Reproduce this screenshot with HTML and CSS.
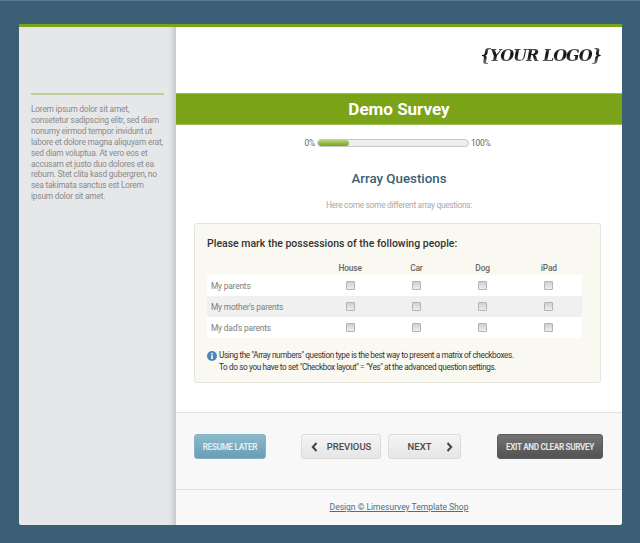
FILE: index.html
```html
<!DOCTYPE html>
<html lang="en">
  <head>
    <meta charset="UTF-8" />
    <title>Demo Survey</title>
    <link rel="stylesheet" href="styles.css">
  </head>
  <body>
    <div class="wrap">
      <aside class="sidebar">
        <p>Lorem ipsum dolor sit amet, consetetur sadipscing elitr, sed diam nonumy eirmod tempor invidunt ut labore et dolore magna aliquyam erat, sed diam voluptua. At vero eos et accusam et justo duo dolores et ea rebum. Stet clita kasd gubergren, no sea takimata sanctus est Lorem ipsum dolor sit amet.</p>
      </aside>

      <main class="content">
        <header class="logo-bar">
          <span class="logo">{YOUR LOGO}</span>
        </header>
        <h1 class="survey-title">Demo Survey</h1>

        <div class="progress">
          <span>0%</span>
          <div class="progress-track"><div class="progress-fill"></div></div>
          <span>100%</span>
        </div>

        <h2 class="group-title">Array Questions</h2>
        <p class="group-desc">Here come some different array questions:</p>

        <section class="question">
          <h3>Please mark the possessions of the following people:</h3>
          <table class="matrix">
            <thead>
              <tr>
                <th></th>
                <th>House</th>
                <th>Car</th>
                <th>Dog</th>
                <th>iPad</th>
              </tr>
            </thead>
            <tbody>
              <tr>
                <td>My parents</td>
                <td><input type="checkbox" /></td>
                <td><input type="checkbox" /></td>
                <td><input type="checkbox" /></td>
                <td><input type="checkbox" /></td>
              </tr>
              <tr class="alt">
                <td>My mother's parents</td>
                <td><input type="checkbox" /></td>
                <td><input type="checkbox" /></td>
                <td><input type="checkbox" /></td>
                <td><input type="checkbox" /></td>
              </tr>
              <tr>
                <td>My dad's parents</td>
                <td><input type="checkbox" /></td>
                <td><input type="checkbox" /></td>
                <td><input type="checkbox" /></td>
                <td><input type="checkbox" /></td>
              </tr>
            </tbody>
          </table>
          <div class="help">
            <svg class="help-icon" width="10" height="10" viewBox="0 0 10 10">
              <circle cx="5" cy="5" r="5" fill="#4f86b8" />
              <rect x="4.2" y="4.2" width="1.6" height="3.8" fill="#fff" />
              <rect x="4.2" y="2" width="1.6" height="1.5" fill="#fff" />
            </svg>
            <p>Using the "Array numbers" question type is the best way to present a matrix of checkboxes.<br />To do so you have to set "Checkbox layout" = "Yes" at the advanced question settings.</p>
          </div>
        </section>

        <div class="nav-bar">
          <button class="btn btn-resume">RESUME LATER</button>
          <div class="nav-group">
            <button class="btn btn-nav btn-prev">
              <svg width="7" height="10" viewBox="0 0 7 10"><path d="M5.5 1L1.8 5l3.7 4" fill="none" stroke="#444" stroke-width="2" /></svg>
              PREVIOUS
            </button>
            <button class="btn btn-nav btn-next">
              NEXT
              <svg width="7" height="10" viewBox="0 0 7 10"><path d="M1.5 1l3.7 4-3.7 4" fill="none" stroke="#444" stroke-width="2" /></svg>
            </button>
          </div>
          <button class="btn btn-exit">EXIT AND CLEAR SURVEY</button>
        </div>

        <footer class="foot">
          <a href="#">Design © Limesurvey Template Shop</a>
        </footer>
      </main>
    </div>
  </body>
</html>
```

FILE: styles.css
```css
html,
body {
  height: 100%;
}
body {
  margin: 0;
  padding: 24px 18px 18px 19px;
  box-sizing: border-box;
  background-color: #3b6076;
  border-top: 1px solid #557a8e;
  font-family: Roboto, "Liberation Sans", sans-serif;
  overflow: hidden;
}
.wrap {
  display: flex;
  width: 603px;
  height: 501px;
  box-sizing: border-box;
  margin-top: -1px;
  border-top: 3px solid #7ba318;
  border-radius: 0 0 3px 3px;
  overflow: hidden;
  background-color: #fff;
}
.sidebar {
  width: 157px;
  flex: none;
  box-sizing: border-box;
  padding: 66px 12px 0;
  background-color: #e6e7e9;
  box-shadow: inset -7px 0 6px -5px rgba(0, 0, 0, 0.18);
}
.sidebar p {
  margin: 0;
  padding-top: 9px;
  border-top: 2px solid #bccf97;
  font-size: 8.4px;
  letter-spacing: -0.22px;
  line-height: 10.9px;
  color: #8b8b8b;
}
.content {
  flex: 1;
  display: flex;
  flex-direction: column;
  min-width: 0;
}
.logo-bar {
  height: 66px;
  flex: none;
  display: flex;
  justify-content: flex-end;
  align-items: center;
  padding-right: 21px;
  box-sizing: border-box;
  padding-bottom: 10px;
}
.logo {
  font-family: "DejaVu Serif", serif;
  font-weight: bold;
  font-style: italic;
  font-size: 16px;
  letter-spacing: -1px;
  background: linear-gradient(#777 0, #111 40%, #222 60%, #999 100%);
  -webkit-background-clip: text;
  background-clip: text;
  color: transparent;
}
.survey-title {
  margin: 0;
  height: 32px;
  flex: none;
  box-sizing: border-box;
  border-top: 1px solid #a0bd5c;
  border-bottom: 1px solid #a0bd5c;
  background-color: #7ba318;
  color: #fff;
  font-size: 17px;
  font-weight: 700;
  line-height: 30px;
  text-align: center;
}
.progress {
  display: flex;
  justify-content: center;
  align-items: center;
  gap: 2px;
  margin-top: 13px;
  padding-right: 3px;
  font-size: 8.4px;
  letter-spacing: -0.2px;
  line-height: 10px;
  color: #666;
}
.progress-track {
  width: 152px;
  height: 8px;
  box-sizing: border-box;
  border: 1px solid #c8c8c8;
  border-radius: 4px;
  background-color: #eee;
  overflow: hidden;
}
.progress-fill {
  width: 31px;
  height: 100%;
  border-radius: 3px;
  background: linear-gradient(#b5d27a, #7ba318);
}
.group-title {
  margin: 22px 0 0;
  font-size: 13.3px;
  font-weight: 500;
  line-height: 18px;
  color: #3b6076;
  text-align: center;
}
.group-desc {
  margin: 11px 0 0;
  font-size: 8.4px;
  letter-spacing: -0.3px;
  line-height: 12px;
  color: #a8a8a8;
  text-align: center;
}
.question {
  margin: 12px 21px 0 18px;
  height: 160px;
  box-sizing: border-box;
  padding: 13px 18px 0 12px;
  background-color: #f9f8f1;
  border: 1px solid #e6e6dc;
  border-radius: 3px;
}
.question h3 {
  margin: 0;
  font-size: 10.5px;
  font-weight: 500;
  line-height: 14px;
  color: #333;
}
.matrix {
  width: 375px;
  margin-top: 11px;
  border-collapse: collapse;
  table-layout: fixed;
}
.matrix th {
  height: 13px;
  padding: 0;
  font-size: 8.4px;
  font-weight: 500;
  letter-spacing: -0.15px;
  line-height: 13px;
  color: #666;
  text-align: center;
}
.matrix th:first-child {
  width: 110px;
}
.matrix td {
  height: 21px;
  padding: 0;
  background-color: #fff;
  text-align: center;
  line-height: 0;
}
.matrix td:first-child {
  padding-left: 4px;
  font-size: 8.4px;
  letter-spacing: -0.2px;
  line-height: 12px;
  color: #7d7d7d;
  text-align: left;
}
.matrix .alt td {
  background-color: #f0f0f0;
}
.matrix input {
  appearance: none;
  width: 9px;
  height: 9px;
  margin: 0;
  border: 1px solid #b4b4b4;
  border-radius: 1px;
  background: linear-gradient(#d0d0d0, #eeeeee);
  vertical-align: middle;
}
.help {
  display: flex;
  gap: 2px;
  margin-top: 11px;
  color: #333;
}
.help-icon {
  flex: none;
  margin-top: 2px;
}
.help p {
  margin: 0;
  font-size: 8.2px;
  letter-spacing: -0.38px;
  line-height: 12px;
}
.nav-bar {
  margin-top: 29px;
  height: 78px;
  flex: none;
  box-sizing: border-box;
  display: flex;
  justify-content: space-between;
  align-items: flex-start;
  padding: 21px 19px 0 18px;
  background-color: #f8f8f8;
  border-top: 1px solid #e2e2e2;
  border-bottom: 1px solid #e2e2e2;
}
.nav-group {
  display: flex;
  gap: 7px;
  margin-left: -1px;
}
.btn {
  height: 25px;
  padding: 0;
  box-sizing: border-box;
  border-radius: 3px;
  font-family: inherit;
  font-weight: 700;
  cursor: pointer;
}
.btn-resume {
  width: 72px;
  border: 1px solid #82b4c8;
  background: linear-gradient(#8db9cb, #6a9db3);
  color: #dfeef4;
  font-size: 8.2px;
  letter-spacing: -0.35px;
}
.btn-nav {
  display: flex;
  align-items: center;
  justify-content: center;
  border: 1px solid #dcdcdc;
  background: linear-gradient(#f4f4f4, #e6e6e6);
  color: #4a4a4a;
  font-size: 9.5px;
  font-weight: 500;
}
.btn-prev {
  width: 80px;
  gap: 9px;
}
.btn-next {
  width: 73px;
  gap: 15px;
  padding-left: 12px;
}
.btn-exit {
  width: 106px;
  border: 1px solid #5c5c5c;
  background: linear-gradient(#737373, #525252);
  color: #e4e4e4;
  font-size: 8.2px;
  letter-spacing: -0.35px;
}
.foot {
  flex: 1;
  background-color: #f8f8f8;
  text-align: center;
  padding-top: 11px;
  font-size: 8.5px;
  line-height: 13px;
}
.foot a {
  color: #4e6e84;
}
```
